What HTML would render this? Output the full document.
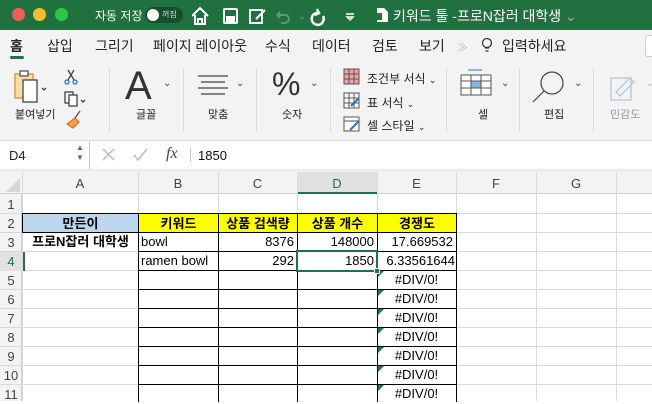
<!DOCTYPE html>
<html><head><meta charset="utf-8"><style>
*{margin:0;padding:0;box-sizing:border-box}
body{width:652px;height:401px;overflow:hidden;background:#fff;font-family:"Liberation Sans","Noto Sans CJK KR",sans-serif;position:relative}
.a{position:absolute}
.t{color:#fff;font-size:12px;white-space:nowrap}
.tab{font-size:14px;color:#222;top:36px;position:absolute;white-space:nowrap}
.lbl{position:absolute;font-size:11px;color:#222;top:106px;white-space:nowrap}
.sep{position:absolute;top:68px;width:1px;height:64px;background:#dcdcdc}
.vl{position:absolute;top:172px;width:1px;height:229px;background:#dadada}
.hl{position:absolute;left:0;width:652px;height:1px;background:#dadada}
.rn{position:absolute;left:0;width:22px;text-align:center;font-size:13px;color:#444}
.ch{position:absolute;top:176px;font-size:13px;color:#444;text-align:center}
.c{position:absolute;font-size:13px;color:#000;height:20px;line-height:19px;white-space:nowrap;overflow:hidden;padding:0 3px}
.r{text-align:right}
.ctr{text-align:center}
.b{font-weight:bold}
.box{border:1px solid #000}
.tri{position:absolute;width:0;height:0;border-top:6px solid #1e7a36;border-right:6px solid transparent}
.chev{position:absolute;font-size:10px;color:#444;top:78px}
</style></head><body>
<!-- title bar -->
<div class="a" style="left:0;top:0;width:652px;height:30px;background:#21703f"></div>
<div class="a" style="left:12px;top:8px;width:13px;height:13px;border-radius:50%;background:#ee5f57"></div>
<div class="a" style="left:33px;top:8px;width:13px;height:13px;border-radius:50%;background:#f5bd2f"></div>
<div class="a" style="left:55px;top:8px;width:13px;height:13px;border-radius:50%;background:#2ec840"></div>
<div class="a t" style="left:95px;top:7px">자동 저장</div>
<div class="a" style="left:145px;top:7px;width:38px;height:16px;border-radius:8px;background:#14502b"></div>
<div class="a" style="left:147px;top:9px;width:12px;height:12px;border-radius:50%;background:#fff"></div>
<div class="a" style="left:162px;top:9px;font-size:8px;color:#ddd">꺼짐</div>
<svg class="a" style="left:192px;top:5px" width="170" height="22" viewBox="0 0 170 22" fill="none" stroke="#fff" stroke-width="2">
<path d="M0 11 L8 3 L16 11 M3 10 V19 H13 V10"/><path d="M6 19v-5h4v5"/>
<rect x="32" y="4" width="13" height="14" rx="1"/><rect x="35" y="12" width="7" height="6" fill="#fff"/>
<rect x="58" y="5" width="12" height="13"/><path d="M64 14 L73 5"/>
<path d="M85 10 h8 a4 4 0 0 1 0 8 h-4 M85 10 l3-3 M85 10 l3 3" stroke="#5e9a74"/>
<path d="M108 12 l2 2 l2-2" stroke="#5e9a74" stroke-width="1"/>
<path d="M127 8 a6 6 0 1 0 4 3 M125 4 l2 4 -4 2" stroke-width="2.5"/>
<path d="M154 9 h8 M155 12 l3 3 3-3z" stroke-width="1.5"/>
</svg>
<svg class="a" style="left:375px;top:7px" width="14" height="16"><path d="M2 1h7l4 4v10H2z" fill="#fff"/><rect x="0" y="6" width="7" height="7" fill="#1e7a36"/></svg>
<div class="a t" style="left:393px;top:6px;font-size:14px">키워드 툴 -프로N잡러 대학생 <span style="color:#8fb89c">⌄</span></div>
<!-- tabs + ribbon -->
<div class="a" style="left:0;top:30px;width:652px;height:110px;background:#f3f3f3"></div>
<div class="tab" style="left:10px;font-weight:bold">홈</div>
<div class="a" style="left:10px;top:56px;width:14px;height:3px;border-radius:2px;background:#217346"></div>
<div class="tab" style="left:47px">삽입</div>
<div class="tab" style="left:95px">그리기</div>
<div class="tab" style="left:153px">페이지 레이아웃</div>
<div class="tab" style="left:265px">수식</div>
<div class="tab" style="left:312px">데이터</div>
<div class="tab" style="left:372px">검토</div>
<div class="tab" style="left:419px">보기</div>
<div class="tab" style="left:457px;color:#bbb;font-size:11px;top:39px">≫</div>
<svg class="a" style="left:481px;top:37px" width="12" height="17" fill="none" stroke="#333" stroke-width="1.2"><circle cx="6" cy="6" r="4.5"/><path d="M4 11h4M4.5 14h3"/></svg>
<div class="tab" style="left:502px">입력하세요</div>
<div class="a" style="left:645px;top:35px;width:10px;height:22px;border:1px solid #ccc;background:#fff;border-radius:3px"></div>
<!-- ribbon icons -->
<svg class="a" style="left:12px;top:68px" width="80" height="66" fill="none" stroke-width="1.3">
<rect x="3" y="6" width="18" height="24" fill="#f6dca8" stroke="#d8922f"/><rect x="8" y="3" width="8" height="5" fill="#fff" stroke="#555"/>
<rect x="11" y="12" width="14" height="22" fill="#fff" stroke="#444"/>
<path d="M30 20l2 2 2-2" stroke="#444"/>
<path d="M56 2l6 10M62 2l-6 10" stroke="#444"/><circle cx="55" cy="14" r="2" stroke="#2a6fd0"/><circle cx="63" cy="14" r="2" stroke="#2a6fd0"/>
<rect x="53" y="24" width="8" height="11" stroke="#444"/><rect x="57" y="27" width="8" height="11" fill="#fff" stroke="#444"/>
<path d="M69 32l2 2 2-2" stroke="#444"/>
<path d="M55 56l8-6 4 4-6 6z" fill="#f0a050" stroke="#e07020"/><path d="M63 50l5-7" stroke="#555"/>
</svg>
<div class="lbl" style="left:15px">붙여넣기</div>
<div class="sep" style="left:109px"></div>
<div class="a" style="left:125px;top:64px;font-size:40px;color:#333">A</div>
<div class="chev" style="left:163px">⌄</div>
<div class="lbl" style="left:136px">글꼴</div>
<div class="sep" style="left:183px"></div>
<svg class="a" style="left:197px;top:74px" width="32" height="22" stroke="#444" stroke-width="1.2"><path d="M1 2h30M4 8h24M1 14h30M4 20h24"/></svg>
<div class="chev" style="left:236px">⌄</div>
<div class="lbl" style="left:208px">맞춤</div>
<div class="sep" style="left:256px"></div>
<div class="a" style="left:272px;top:66px;font-size:32px;color:#333">%</div>
<div class="chev" style="left:310px">⌄</div>
<div class="lbl" style="left:282px">숫자</div>
<div class="sep" style="left:330px"></div>
<svg class="a" style="left:343px;top:68px" width="18" height="64" stroke="#555" stroke-width="1">
<rect x="1" y="1" width="15" height="15" fill="#f0a0a0"/><path d="M6 1v15M11 1v15M1 6h15M1 11h15"/>
<rect x="1" y="25" width="15" height="15" fill="#fff"/><path d="M6 25v15M11 25v15M1 30h15M1 35h15"/><path d="M8 38l8-8" stroke="#2a6fd0" stroke-width="2"/>
<rect x="1" y="49" width="15" height="14" fill="#fff"/><path d="M1 53h15"/><path d="M7 62l9-9" stroke="#2a6fd0" stroke-width="2"/>
</svg>
<div class="a" style="left:367px;top:70px;font-size:12px;color:#222;white-space:nowrap">조건부 서식 <span style="font-size:9px">⌄</span></div>
<div class="a" style="left:367px;top:94px;font-size:12px;color:#222;white-space:nowrap">표 서식 <span style="font-size:9px">⌄</span></div>
<div class="a" style="left:367px;top:117px;font-size:12px;color:#222;white-space:nowrap">셀 스타일 <span style="font-size:9px">⌄</span></div>
<div class="sep" style="left:446px"></div>
<svg class="a" style="left:460px;top:68px" width="34" height="30" stroke="#555" stroke-width="1"><path d="M8 2h14" stroke="#2a6fd0"/><rect x="1" y="7" width="30" height="20" fill="#fff"/><rect x="11" y="13" width="10" height="7" fill="#7fb6e8"/><path d="M11 7v20M21 7v20M1 13h30M1 20h30"/></svg>
<div class="chev" style="left:501px">⌄</div>
<div class="lbl" style="left:478px">셀</div>
<div class="sep" style="left:519px"></div>
<svg class="a" style="left:531px;top:70px" width="36" height="34" fill="none" stroke="#444" stroke-width="1.2"><circle cx="21" cy="13" r="11"/><path d="M13 21L2 32"/></svg>
<div class="chev" style="left:574px">⌄</div>
<div class="lbl" style="left:544px">편집</div>
<div class="sep" style="left:593px"></div>
<svg class="a" style="left:608px;top:70px" width="36" height="32" fill="none" stroke="#a8c4dc" stroke-width="1.2"><rect x="3" y="8" width="20" height="22"/><path d="M8 22l14-14 4 4-14 14z"/></svg>
<div class="chev" style="left:646px;color:#bbb">⌄</div>
<div class="lbl" style="left:610px;color:#999">민감도</div>
<!-- formula bar -->
<div class="a" style="left:0;top:140px;width:652px;height:1px;background:#ddd"></div>
<div class="a" style="left:0;top:141px;width:652px;height:28px;background:#fff"></div>
<div class="a" style="left:9px;top:148px;font-size:13px;color:#222">D4</div>
<div class="a" style="left:76px;top:143px;font-size:8px;color:#666;line-height:10px">▲<br>▼</div>
<div class="a" style="left:89px;top:141px;width:1px;height:28px;background:#ccc"></div>
<svg class="a" style="left:102px;top:148px" width="50" height="14" fill="none" stroke="#bbb" stroke-width="1.5"><path d="M1 1l11 11M12 1L1 12"/><path d="M32 7l4 5 9-11"/></svg>
<div class="a" style="left:166px;top:145px;font-size:16px;color:#444;font-family:'Liberation Serif',serif;font-style:italic">fx</div>
<div class="a" style="left:190px;top:148px;width:1px;height:14px;background:#ccc"></div>
<div class="a" style="left:198px;top:148px;font-size:13px;color:#111">1850</div>
<div class="a" style="left:0;top:169px;width:652px;height:3px;background:#ececec"></div>
<!-- column header -->
<div class="a" style="left:0;top:172px;width:652px;height:22px;background:#f3f3f3;border-bottom:1px solid #d0d0d0"></div>
<div class="a" style="left:0;top:194px;width:22px;height:207px;background:#f3f3f3;border-right:1px solid #d0d0d0"></div>
<svg class="a" style="left:6px;top:178px" width="14" height="14"><path d="M14 0V14H0z" fill="#d6d6d6"/></svg>
<div class="a" style="left:297px;top:172px;width:80px;height:22px;background:#e1e1e1;border-bottom:2px solid #217346"></div>
<div class="ch" style="left:22px;width:116px">A</div>
<div class="ch" style="left:138px;width:80px">B</div>
<div class="ch" style="left:218px;width:79px">C</div>
<div class="ch" style="left:297px;width:80px;color:#217346">D</div>
<div class="ch" style="left:377px;width:79px">E</div>
<div class="ch" style="left:456px;width:80px">F</div>
<div class="ch" style="left:536px;width:80px">G</div>
<!-- grid -->
<div class="vl" style="left:22px"></div><div class="vl" style="left:138px"></div><div class="vl" style="left:218px"></div><div class="vl" style="left:297px"></div><div class="vl" style="left:377px"></div><div class="vl" style="left:456px"></div><div class="vl" style="left:536px"></div><div class="vl" style="left:616px"></div>
<div class="hl" style="top:213px"></div><div class="hl" style="top:232px"></div><div class="hl" style="top:251px"></div><div class="hl" style="top:270px"></div><div class="hl" style="top:289px"></div><div class="hl" style="top:308px"></div><div class="hl" style="top:327px"></div><div class="hl" style="top:346px"></div><div class="hl" style="top:365px"></div><div class="hl" style="top:384px"></div>
<div class="rn" style="top:197px">1</div><div class="rn" style="top:216px">2</div><div class="rn" style="top:235px">3</div><div class="rn" style="top:252px;height:19px;padding-top:2px;color:#217346;background:#e1e1e1">4</div><div class="rn" style="top:273px">5</div><div class="rn" style="top:292px">6</div><div class="rn" style="top:311px">7</div><div class="rn" style="top:330px">8</div><div class="rn" style="top:349px">9</div><div class="rn" style="top:368px">10</div><div class="rn" style="top:387px">11</div>
<!-- cells -->
<div class="c box ctr b" style="left:22px;top:213px;width:117px;background:#bcd6ee">만든이</div>
<div class="c ctr b" style="left:22px;top:232px;width:117px;padding:0">프로N잡러 대학생</div>
<div class="c box ctr b" style="left:138px;top:213px;width:81px;background:#ffff00">키워드</div>
<div class="c box ctr b" style="left:218px;top:213px;width:80px;background:#ffff00">상품 검색량</div>
<div class="c box ctr b" style="left:297px;top:213px;width:81px;background:#ffff00">상품 개수</div>
<div class="c box ctr b" style="left:377px;top:213px;width:80px;background:#ffff00">경쟁도</div>
<div class="a" style="left:138px;top:232px;width:319px;height:170px;border-left:1px solid #000;border-right:1px solid #000"></div>
<div class="a" style="left:218px;top:232px;width:1px;height:170px;background:#000"></div>
<div class="a" style="left:297px;top:232px;width:1px;height:170px;background:#000"></div>
<div class="a" style="left:377px;top:232px;width:1px;height:170px;background:#000"></div>
<div class="a" style="left:138px;top:251px;width:319px;height:1px;background:#000"></div>
<div class="a" style="left:138px;top:270px;width:319px;height:1px;background:#000"></div>
<div class="a" style="left:138px;top:289px;width:319px;height:1px;background:#000"></div>
<div class="a" style="left:138px;top:308px;width:319px;height:1px;background:#000"></div>
<div class="a" style="left:138px;top:327px;width:319px;height:1px;background:#000"></div>
<div class="a" style="left:138px;top:346px;width:319px;height:1px;background:#000"></div>
<div class="a" style="left:138px;top:365px;width:319px;height:1px;background:#000"></div>
<div class="a" style="left:138px;top:384px;width:319px;height:1px;background:#000"></div>
<div class="c" style="left:139px;top:232px;width:79px;padding-left:2px">bowl</div>
<div class="c r" style="left:218px;top:232px;width:79px">8376</div>
<div class="c r" style="left:297px;top:232px;width:80px">148000</div>
<div class="c r" style="left:377px;top:232px;width:79px">17.669532</div>
<div class="c" style="left:139px;top:251px;width:79px;padding-left:2px">ramen bowl</div>
<div class="c r" style="left:218px;top:251px;width:79px">292</div>
<div class="c r" style="left:297px;top:251px;width:80px">1850</div>
<div class="c r" style="left:377px;top:251px;width:79px;padding-right:1px">6.33561644</div>
<div class="c ctr" style="left:377px;top:270px;width:79px">#DIV/0!</div>
<div class="c ctr" style="left:377px;top:289px;width:79px">#DIV/0!</div>
<div class="c ctr" style="left:377px;top:308px;width:79px">#DIV/0!</div>
<div class="c ctr" style="left:377px;top:327px;width:79px">#DIV/0!</div>
<div class="c ctr" style="left:377px;top:346px;width:79px">#DIV/0!</div>
<div class="c ctr" style="left:377px;top:365px;width:79px">#DIV/0!</div>
<div class="c ctr" style="left:377px;top:384px;width:79px">#DIV/0!</div>
<div class="tri" style="left:378px;top:271px"></div><div class="tri" style="left:378px;top:290px"></div><div class="tri" style="left:378px;top:309px"></div><div class="tri" style="left:378px;top:328px"></div><div class="tri" style="left:378px;top:347px"></div><div class="tri" style="left:378px;top:366px"></div><div class="tri" style="left:378px;top:385px"></div>
<div class="a" style="left:23px;top:252px;width:2px;height:19px;background:#217346"></div>
<div class="a" style="left:296px;top:250px;width:82px;height:22px;border:2px solid #217346"></div>
<div class="a" style="left:374px;top:268px;width:6px;height:6px;background:#217346;border:1px solid #fff"></div>
</body></html>
